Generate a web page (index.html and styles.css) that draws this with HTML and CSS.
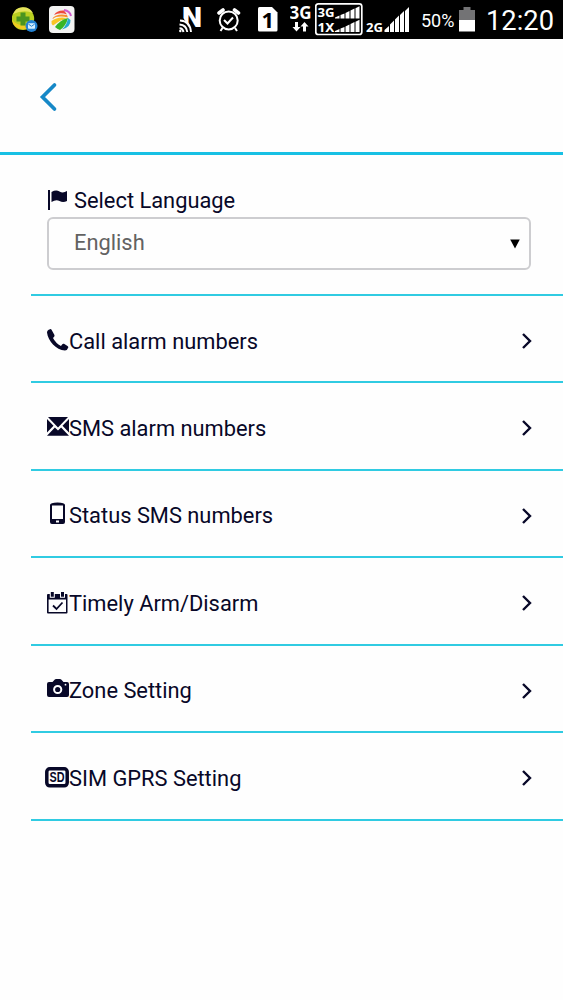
FILE: index.html
```html
<!DOCTYPE html>
<html lang="en">
<head>
<meta charset="utf-8">
<title>Alarm settings</title>
<link rel="stylesheet" href="styles.css">
</head>
<body>
<div class="status">
  <div class="status-group">
    <svg width="26" height="39" viewBox="12 0 26 39">
      <circle cx="23" cy="18.8" r="11.2" fill="#b9cf20"/>
      <path d="M13 14A11.2 11.2 0 0 1 33 13Q24 9 13 14Z" fill="#e5e35c"/>
      <path d="M12 20Q20 29 33 23A11.2 11.2 0 0 1 12 20Z" fill="#f1cb22"/>
      <path d="M20.500 12.500h5v4h4v5h-4v4h-5v-4h-4v-5h4z" fill="#4b9420"/>
      <circle cx="31.500" cy="26" r="6" fill="#2482d2"/>
      <rect x="28" y="23.300" width="7" height="5.400" rx=".7" fill="#d4efff"/>
      <path d="M28.300 24l3.200 2.300L34.700 24" fill="none" stroke="#2482d2"/>
    </svg>
    <svg width="26" height="39" viewBox="49 0 26 39">
      <rect x="49" y="6" width="25.500" height="27" rx="4" fill="#f3f3f2"/>
      <path d="M54 15Q57 10 64 10.500L67 14.500Q60 12 54 15Z" fill="#ee4a3b"/>
      <path d="M52 19Q56 13 67 15L68 17.500Q58 15 52 19Z" fill="#f8922b"/>
      <path d="M51.500 21Q58 16 67 18Q60 20 53 25.500Q51 24 51.500 21Z" fill="#f9c525"/>
      <path d="M55 27Q60 20 68 18Q66 26 60 30Q57 29 55 27Z" fill="#38b526"/>
      <path d="M62 29.500Q67 25 68 18L70.500 20Q71 27 62 29.500Z" fill="#25a9cf"/>
      <path d="M64 10Q70 11 71 16" fill="none" stroke="#d05bcb" stroke-width="2"/>
    </svg>
  </div>
  <div class="status-group status-right">
    <svg width="24" height="39" viewBox="179 0 24 39">
      <text class="nfc" x="182" y="26.500" textLength="20" lengthAdjust="spacingAndGlyphs">N</text>
      <path d="M177 18h6L195 33h-18z" fill="#000"/>
      <g fill="none" stroke="#fff" stroke-width="1.900"><path d="M180 20.500Q190 21 191 32M179.500 24.500Q186.500 25 187.300 32M179.500 28.300Q183 28.500 183.500 32"/></g>
      <circle cx="180.300" cy="31" r="1.200" fill="#fff"/>
    </svg>
    <svg class="alarm" width="24" height="39" viewBox="217 0 24 39">
      <g fill="none" stroke="#fff" stroke-width="2"><circle cx="228.700" cy="20.400" r="9"/><path d="M224 20l3.500 3.500 5.500-6M222.500 28l-2 3M235 28l2 3"/><path stroke-width="3.600" stroke-linecap="round" d="M219 13l4-3M234.500 10l4 3"/></g>
    </svg>
    <svg class="sim" width="20" height="39" viewBox="258 0 20 39">
      <path d="M258 8.500q0-1.500 1.500-1.500H272l5.500 5.500V30q0 1.500-1.500 1.500h-16.500q-1.500 0-1.500-1.500z" fill="#fff"/>
      <text class="sim-no" x="261.500" y="27.500">1</text>
    </svg>
    <svg class="data" width="22" height="39" viewBox="290 0 22 39">
      <text class="net" x="289.500" y="18.800" font-size="17" textLength="22" lengthAdjust="spacingAndGlyphs">3G</text>
      <path d="M295 22h3v5h2.500l-4 4.500-4-4.500h2.500zM303 31.500h3v-5h2.500l-4-4.500-4 4.500h2.500z" fill="#fff"/>
    </svg>
    <svg class="dual" width="48" height="39" viewBox="315 0 48 39">
      <rect x="315.800" y="3.800" width="46" height="30.700" rx="2.500" fill="none" stroke="#fff" stroke-width="1.700"/>
      <text class="net" x="317.500" y="16.500" font-size="13" textLength="17" lengthAdjust="spacingAndGlyphs">3G</text>
      <text class="net" x="317.500" y="31.800" font-size="13" textLength="17" lengthAdjust="spacingAndGlyphs">1X</text>
      <path d="M335 18.500v-1l4.500-2v3zM340.500 18.500V15l4-1.500v5zM345.500 18.500V13l4-2v7.500zM350.500 18.500v-8l4-2v10zM355.500 18.500V8.300l4-2v12.200zM335 32v-1l4.500-2v3zM340.500 32v-3.500l4-1.500v5zM345.500 32v-5.500l4-2V32zM350.500 32v-8l4-2v10zM355.500 32V21.800l4-2V32z" fill="#fff"/>
    </svg>
    <svg class="cell" width="44" height="39" viewBox="366 0 44 39">
      <text class="net" x="366" y="32" font-size="13" textLength="17" lengthAdjust="spacingAndGlyphs">2G</text>
      <path d="M384.500 32v-2l4.500-4v6zM390 32v-7.500l4-4V32zM395 32V19.500l4-4V32zM400 32V15l4-4v21zM405 32V11l4-4v25z" fill="#fff"/>
    </svg>
    <span class="percent">50%</span>
    <svg class="battery" width="16" height="39" viewBox="459 0 16 39">
      <path d="M459 10h4.500V7h7v3h4.500v10h-16z" fill="#737375"/><path d="M459 20h16v11.500h-16z" fill="#fff"/>
    </svg>
    <span class="clock">12:20</span>
  </div>
</div>

<header class="header">
  <svg width="20" height="30" viewBox="0 0 20 30"><path d="M16.500 3L4.500 15l12 12" fill="none" stroke="#1688c7" stroke-width="3.700" stroke-linecap="round"/></svg>
</header>

<main class="main">
  <section class="language">
    <div class="label">
      <svg width="21" height="22" viewBox="0 0 21 22"><path d="M1 1h2v20H1zM4.500 3Q9 .5 12.500 2.500T20 2v10q-4 2-7.500 0t-8 1z"/></svg>
      <span>Select Language</span>
    </div>
    <div class="select"><span>English</span><svg width="10" height="10" viewBox="0 0 10 10"><path d="M.2.500h9.600L5 9.500z" fill="#000"/></svg></div>
  </section>

  <ul class="list">
    <li class="row">
      <svg class="icon" width="24" height="24" viewBox="0 0 24 24"><path d="M5 1.200Q2 2 2 4.500C3 13 11 22 20 22.600Q22.500 22 23.300 19.500 23.500 18.500 22.500 18L19 15.800Q18 15.400 17.300 16.200L16 18Q10.500 15 8 10L9.300 8.500Q9.800 7.700 9.300 6.700L6.700 2Q6 .8 5 1.200Z"/></svg>
      <span>Call alarm numbers</span>
      <svg class="chevron" width="12" height="16" viewBox="0 0 12 16"><path d="M2 1l7 7-7 7"/></svg>
    </li>
    <li class="row">
      <svg class="icon" width="24" height="24" viewBox="0 0 24 24"><path d="M3 2h20L13 12.500zM2 4l6.500 6.800L2 17.500zM24 4v13.500l-6.500-6.700zM2 20.800l7.900-8.300L13 15.500l3.100-3 7.900 8.300z"/></svg>
      <span>SMS alarm numbers</span>
      <svg class="chevron" width="12" height="16" viewBox="0 0 12 16"><path d="M2 1l7 7-7 7"/></svg>
    </li>
    <li class="row">
      <svg class="icon" width="24" height="24" viewBox="0 0 24 24"><path fill-rule="evenodd" d="M5 3Q5 .5 12.500.500T20 3v17q0 2-2 2H7q-2 0-2-2zM7 3.500V17h11V3.500zM11 18.500v2h3v-2z"/></svg>
      <span>Status SMS numbers</span>
      <svg class="chevron" width="12" height="16" viewBox="0 0 12 16"><path d="M2 1l7 7-7 7"/></svg>
    </li>
    <li class="row">
      <svg class="icon" width="24" height="24" viewBox="0 -1 24 24"><path fill-rule="evenodd" d="M3 3h18.500q1 0 1 1v17.500q0 1-1 1H3q-1 0-1-1V4q0-1 1-1zM3.600 8.500V21H21V8.500z"/><path class="cut" d="M4.800 2h5v4.700h-5zM15 2h5v4.700h-5z"/><path d="M5.800 1h3v4.700h-3zM16 1h3v4.700h-3z"/><path d="M8 14.500l3.500 3.500 6-6.500" fill="none" stroke="#080828" stroke-width="1.800"/></svg>
      <span>Timely Arm/Disarm</span>
      <svg class="chevron" width="12" height="16" viewBox="0 0 12 16"><path d="M2 1l7 7-7 7"/></svg>
    </li>
    <li class="row">
      <svg class="icon" width="24" height="24" viewBox="0 -1 24 24"><path d="M4 4h3.500l2.300-2.500q.5-.5 1.200-.5h4q.7 0 1.200.5L18.500 4H22q2 0 2 2v11q0 2-2 2H4q-2 0-2-2V6q0-2 2-2z"/><circle cx="12.700" cy="11.500" r="3.600" fill="none" stroke="#fff" stroke-width="2"/><circle class="cut" cx="20.500" cy="6.700" r=".9"/></svg>
      <span>Zone Setting</span>
      <svg class="chevron" width="12" height="16" viewBox="0 0 12 16"><path d="M2 1l7 7-7 7"/></svg>
    </li>
    <li class="row">
      <svg class="icon" width="24" height="24" viewBox="0 -1 24 24"><rect x="1.800" y="2.800" width="20.400" height="17" rx="3" fill="#fff" stroke="#080828" stroke-width="3.500"/><text class="card" x="4.500" y="16" textLength="15" lengthAdjust="spacingAndGlyphs">SD</text></svg>
      <span>SIM GPRS Setting</span>
      <svg class="chevron" width="12" height="16" viewBox="0 0 12 16"><path d="M2 1l7 7-7 7"/></svg>
    </li>
  </ul>
</main>
</body>
</html>
```
FILE: styles.css
```css
* { box-sizing: border-box; }
body {
  margin: 0;
  min-height: 1000px;
  background: #fefefe;
  color: #080828;
  font-family: Roboto, sans-serif;
  font-size: 21.850px;
}
svg { display: block; flex: none; }

.status {
  display: flex;
  justify-content: space-between;
  height: 39px;
  padding: 0 9px 0 12px;
  background: #000;
  color: #fff;
}
.status-group { display: flex; gap: 11px; }
.status-right { gap: 0; }
.alarm { margin-left: 14px; }
.sim { margin-left: 17px; }
.data { margin-left: 12px; }
.dual, .cell { margin-left: 3px; }
.percent {
  width: 34px;
  margin-left: 11px;
  font-size: 18px;
  line-height: 41px;
  white-space: nowrap;
}
.battery { margin-left: 4px; }
.clock {
  width: 68px;
  margin-left: 11px;
  font-size: 27.300px;
  line-height: 43px;
  white-space: nowrap;
}
.nfc { font: 900 27px Roboto, sans-serif; fill: #fff; }
.sim-no { font: bold 22px "Open Sans", sans-serif; fill: #000; }
.net { font-family: "Noto Sans", sans-serif; font-weight: bold; fill: #fff; }
.card { font: bold 14px "Liberation Sans", sans-serif; fill: #080828; }

.header {
  display: flex;
  align-items: center;
  height: 116px;
  padding: 2px 0 0 38px;
  border-bottom: 3px solid #18c0e4;
}
.main { padding: 32px 0 0 31px; }
.language { padding: 0 32px 24px 16px; }
.label {
  display: flex;
  align-items: center;
  gap: 6px;
  height: 30px;
  padding-bottom: 4px;
}
.label svg { fill: #080828; }
.select {
  display: flex;
  align-items: center;
  justify-content: space-between;
  height: 53px;
  padding: 0 9px 3px 25px;
  border: 2px solid #cdcdd0;
  border-radius: 6px;
  color: #626262;
}
.select svg { margin-top: 3px; }
.list {
  margin: 0;
  padding: 0;
  list-style: none;
  border-top: 2px solid #30cbe2;
}
.row {
  display: flex;
  align-items: center;
  height: 87.500px;
  padding: 5px 30px 0 14px;
  border-bottom: 2px solid #30cbe2;
}
.row:first-child { height: 87px; }
.icon { margin-top: -3px; fill: #080828; }
.cut { fill: #fff; }
.chevron { margin-left: auto; fill: none; stroke: #080828; stroke-width: 2.400px; }
```
